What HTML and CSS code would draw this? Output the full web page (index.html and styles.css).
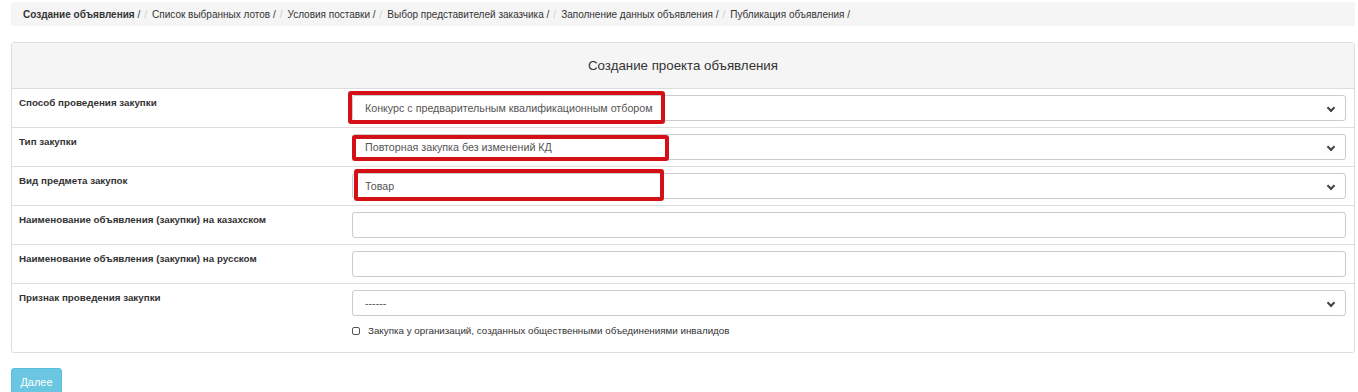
FILE: index.html
```html
<!DOCTYPE html>
<html lang="ru">
<head>
  <meta charset="UTF-8" />
  <title>Создание объявления</title>
  <link rel="stylesheet" href="styles.css">
</head>
<body>
  <ul class="breadcrumb">
    <li class="active"><b>Создание объявления</b> /</li>
    <li>Список выбранных лотов /</li>
    <li>Условия поставки /</li>
    <li>Выбор представителей заказчика /</li>
    <li>Заполнение данных объявления /</li>
    <li>Публикация объявления /</li>
  </ul>

  <div class="panel">
    <div class="panel-heading">Создание проекта объявления</div>

    <div class="form-row">
      <label>Способ проведения закупки</label>
      <div class="field">
        <div class="select">Конкурс с предварительным квалификационным отбором</div>
        <div class="mark mark-1"></div>
      </div>
    </div>
    <div class="form-row">
      <label>Тип закупки</label>
      <div class="field">
        <div class="select">Повторная закупка без изменений КД</div>
        <div class="mark mark-2"></div>
      </div>
    </div>
    <div class="form-row">
      <label>Вид предмета закупок</label>
      <div class="field">
        <div class="select">Товар</div>
        <div class="mark mark-3"></div>
      </div>
    </div>
    <div class="form-row">
      <label>Наименование объявления (закупки) на казахском</label>
      <div class="field"><div class="input"></div></div>
    </div>
    <div class="form-row">
      <label>Наименование объявления (закупки) на русском</label>
      <div class="field"><div class="input"></div></div>
    </div>
    <div class="form-row last">
      <label>Признак проведения закупки</label>
      <div class="field">
        <div class="select">------</div>
        <div class="checkbox"><span class="box"></span>Закупка у организаций, созданных общественными объединениями инвалидов</div>
      </div>
    </div>
  </div>

  <button class="btn-next">Далее</button>
</body>
</html>
```

FILE: styles.css
```css
* { box-sizing: border-box; margin: 0; padding: 0; }
html, body {
  width: 100%;
  height: 100%;
  background: #fff;
  font-family: "Liberation Sans", Arial, sans-serif;
  color: #333;
  overflow: hidden;
}
body { padding: 2px 3px 0 11px; }

.breadcrumb {
  list-style: none;
  display: flex;
  height: 24px;
  align-items: center;
  background: #f5f5f5;
  border-radius: 3px;
  padding: 0 12px;
  font-size: 10px;
  color: #333;
}
.breadcrumb li + li::before { content: "/"; color: #ccc; margin: 0 5px 0 4px; }

.panel {
  margin-top: 16px;
  border: 1px solid #ddd;
  border-radius: 3px;
  width: 1344px;
}
.panel-heading {
  height: 46px;
  background: #f5f5f5;
  border-bottom: 1px solid #ddd;
  display: flex;
  align-items: center;
  justify-content: center;
  font-size: 13.3px;
  color: #333;
}

.form-row {
  display: grid;
  grid-template-columns: 333px 1fr;
  padding: 6px 8px 6px 7px;
  height: 39px;
  border-bottom: 1px solid #ddd;
}
.form-row.last { border-bottom: none; height: 68px; }
.form-row label {
  font-size: 9.8px;
  font-weight: bold;
  padding-top: 2px;
}
.field { position: relative; }

.select, .input {
  height: 26px;
  border: 1px solid #ccc;
  border-radius: 3px;
  background: #fff;
  font-size: 10.7px;
  color: #555;
  display: flex;
  align-items: center;
  padding-left: 12px;
  position: relative;
}
.select::after {
  content: "";
  position: absolute;
  right: 11px;
  top: 9px;
  width: 4px;
  height: 4px;
  border-right: 2px solid #444;
  border-bottom: 2px solid #444;
  transform: rotate(45deg);
}

.mark {
  position: absolute;
  border: 4px solid #d50f16;
  border-radius: 3px;
}
.mark-1 { left: -4px; top: -4px; width: 317px; height: 33px; }
.mark-2 { left: 0; top: 1px; width: 317px; height: 26px; }
.mark-3 { left: 2px; top: -4px; width: 310px; height: 32px; }

.checkbox {
  display: flex;
  align-items: center;
  margin-top: 9px;
  font-size: 9.8px;
  color: #333;
}
.checkbox .box {
  width: 8px;
  height: 8px;
  border: 1px solid #555;
  border-radius: 2px;
  margin-right: 8px;
}

.btn-next {
  margin-top: 15px;
  width: 51px;
  height: 28px;
  border: 1px solid #46b8da;
  border-radius: 3px;
  background: #5bc0de;
  opacity: 0.9;
  color: #fff;
  font-family: "Liberation Sans", Arial, sans-serif;
  font-size: 11px;
  display: block;
}
```
